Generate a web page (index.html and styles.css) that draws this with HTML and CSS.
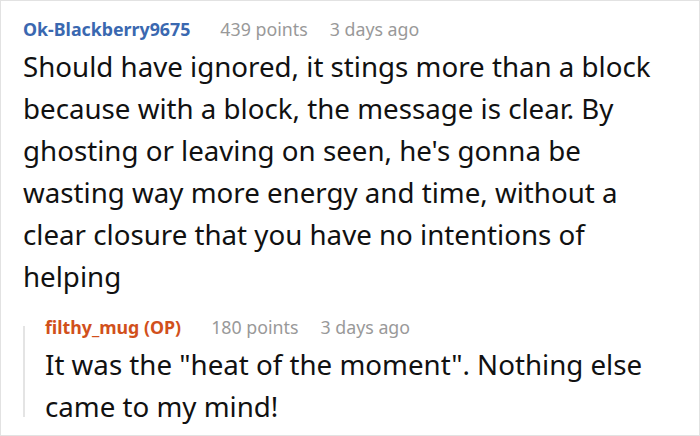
FILE: index.html
```html
<!DOCTYPE html>
<html>
<head>
<meta charset="utf-8">
<link rel="stylesheet" href="styles.css">
</head>
<body>
<div class="frame">
  <div class="comment">
    <div class="meta">
      <span class="user">Ok-Blackberry9675</span>
      <span class="points">439 points</span>
      <span class="time">3 days ago</span>
    </div>
    <p class="text">Should have ignored, it stings more than a block because with a block, the message is clear. By ghosting or leaving on seen, he's gonna be wasting way more energy and time, without a clear closure that you have no intentions of helping</p>
    <div class="reply">
      <div class="thread"></div>
      <div class="reply-body">
        <div class="meta">
          <span class="user op">filthy_mug (OP)</span>
          <span class="points">180 points</span>
          <span class="time">3 days ago</span>
        </div>
        <p class="text">It was the "heat of the moment". Nothing else came to my mind!</p>
      </div>
    </div>
  </div>
</div>
</body>
</html>
```
FILE: styles.css
```css
html, body {
  margin: 0;
  padding: 0;
  background: #fff;
}
.frame {
  box-sizing: border-box;
  width: 700px;
  height: 436px;
  border: 1px solid #e2e2e2;
  overflow: hidden;
  font-family: "Noto Sans", "Open Sans", sans-serif;
}
.comment {
  padding: 16px 34px 0 22px;
}
.meta {
  display: flex;
  align-items: baseline;
  font-size: 17.8px;
  line-height: 24px;
  color: #999;
}
.user {
  font-weight: 700;
  color: #3a68b0;
  margin-right: 30px;
}
.user.op {
  color: #d1501b;
}
.points {
  margin-right: 22px;
}
.text {
  margin: 4px 0 0;
  font-size: 27.7px;
  line-height: 42px;
  color: #111;
}
.reply {
  display: flex;
  margin-top: 18px;
}
.thread {
  width: 2px;
  margin: 11px 20px 10px 0;
  background: #e4e4e4;
}
.reply-body {
  flex: 1;
}
```
